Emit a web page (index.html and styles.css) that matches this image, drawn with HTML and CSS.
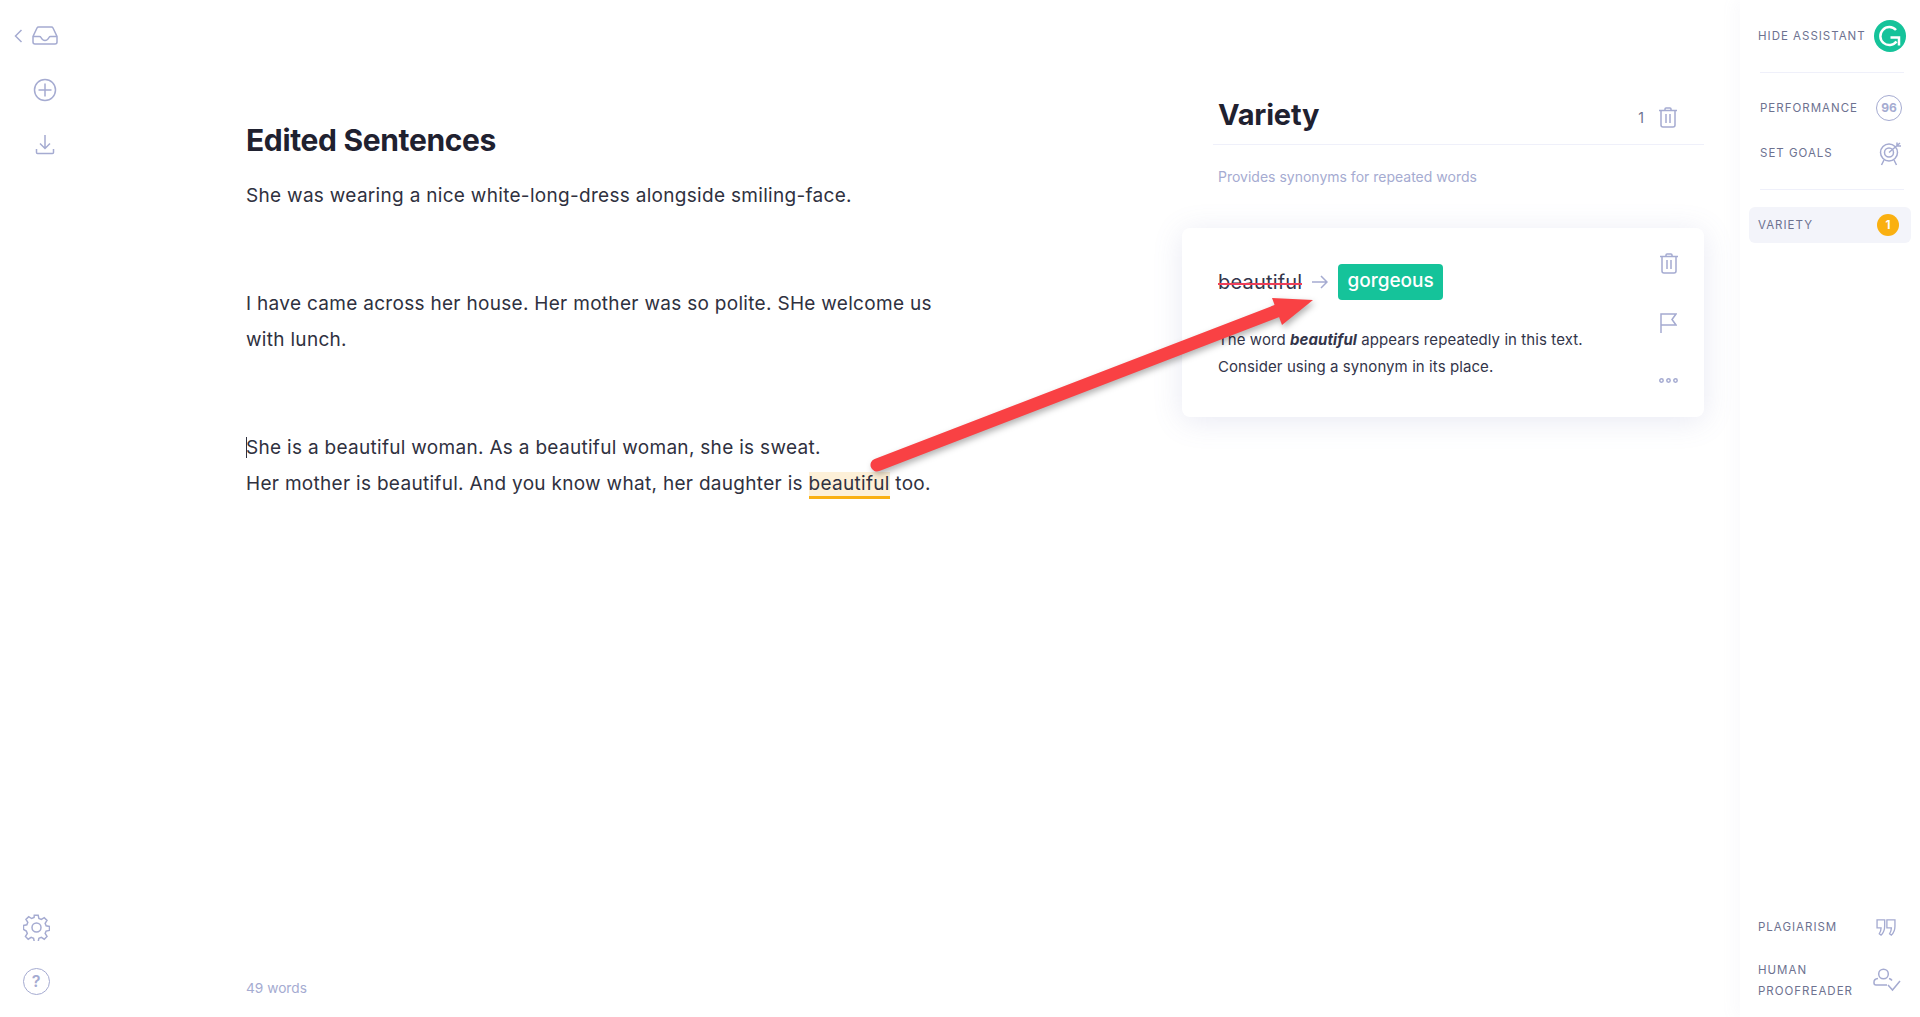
FILE: index.html
```html
<!DOCTYPE html>
<html lang="en">
<head>
  <meta charset="UTF-8">
  <title>Edited Sentences</title>
  <link rel="stylesheet" href="styles.css">
</head>
<body>

  <!-- left rail -->
  <nav class="rail">
    <div class="rail-top">
      <div class="rail-inbox">
        <svg class="ico-chevron" width="9" height="14" viewBox="0 0 9 14"><path d="M7.5 1 1.5 7l6 6"/></svg>
        <svg width="26" height="19" viewBox="0 0 26 19"><path d="M6.500 1h13q1 0 1.500 1L25 10.500V16q0 2-2 2H3q-2 0-2-2v-5.500L5 2q.5-1 1.500-1zM1 10.500h6.500q1 0 1.500 1 1.500 3 4 3t4-3q.5-1 1.500-1H25"/></svg>
      </div>
      <svg width="24" height="24" viewBox="0 0 24 24"><circle cx="12" cy="12" r="10.500"/><path d="M12 5.500v13M5.500 12h13"/></svg>
      <svg width="20" height="21" viewBox="0 0 20 21"><path d="M10 1v13M5 9.500l5 5 5-5M1.500 15v3.500q0 1 1 1h15q1 0 1-1V15"/></svg>
    </div>
    <div class="rail-bottom">
      <svg width="27" height="27" viewBox="0 0 27 27"><circle cx="13.500" cy="13.500" r="4.500"/><path d="M11.500 1h4l.7 3.400 2.500 1 3-1.900 2.800 2.800-1.900 3 1 2.500 3.400.7v4l-3.400.7-1 2.500 1.900 3-2.800 2.800-3-1.900-2.500 1-.7 3.400h-4l-.7-3.400-2.500-1-3 1.900-2.800-2.800 1.900-3-1-2.500L.5 15.500v-4l3.400-.7 1-2.500-1.900-3 2.800-2.800 3 1.900 2.500-1z" transform="translate(0 .2) scale(.98)"/></svg>
      <div class="help">?</div>
    </div>
  </nav>

  <!-- document -->
  <main class="editor">
    <h1>Edited Sentences</h1>
    <p class="para-1">She was wearing a nice white-long-dress alongside smiling-face.</p>
    <p class="para-2">I have came across her house. Her mother was so polite. SHe welcome us<br>with lunch.</p>
    <p class="para-3"><span class="caret"></span>She is a beautiful woman. As a beautiful woman, she is sweat.<br>Her mother is beautiful. And you know what, her daughter is <span class="mark">beautiful</span> too.</p>
    <div class="word-count">49 words</div>
  </main>

  <!-- suggestion panel -->
  <section class="panel">
    <header class="panel-head">
      <h2>Variety</h2>
      <div class="panel-count">
        <span>1</span>
        <svg class="ico-trash" width="18" height="21" viewBox="0 0 18 21"><path d="M0 3.500h18M6 3.500V2q0-1 1-1h4q1 0 1 1v1.500M2 3.500V18q0 2 2 2h10q2 0 2-2V3.500M7 7v9M11 7v9"/></svg>
      </div>
    </header>
    <p class="panel-sub">Provides synonyms for repeated words</p>

    <article class="card">
      <div class="card-body">
        <div class="swap">
          <span class="old">beautiful</span>
          <svg class="ico-arrow" width="16" height="14" viewBox="0 0 16 14"><path d="M0 7h15M9 1l6 6-6 6"/></svg>
          <span class="new">gorgeous</span>
        </div>
        <p>The word <b>beautiful</b> appears repeatedly in this text.<br>Consider using a synonym in its place.</p>
      </div>
      <div class="card-actions">
        <svg class="ico-trash" width="18" height="21" viewBox="0 0 18 21"><path d="M0 3.500h18M6 3.500V2q0-1 1-1h4q1 0 1 1v1.500M2 3.500V18q0 2 2 2h10q2 0 2-2V3.500M7 7v9M11 7v9"/></svg>
        <svg width="17" height="20" viewBox="0 0 17 20"><path d="M1 20V1h15l-4 5.500 4 5.500H1"/></svg>
        <svg width="19" height="5" viewBox="0 0 19 5"><circle cx="2.500" cy="2.500" r="1.700"/><circle cx="9.500" cy="2.500" r="1.700"/><circle cx="16.500" cy="2.500" r="1.700"/></svg>
      </div>
    </article>
  </section>

  <!-- right sidebar -->
  <aside class="side">
    <div class="side-top">
      <div class="side-row hide-row">
        <span>Hide assistant</span>
        <div class="logo">
          <svg width="32" height="32" viewBox="0 0 32 32"><path d="M22.500 21.500A9 9 0 1 1 22 10"/><path d="M16.500 17.500h8.500v8"/></svg>
        </div>
      </div>
      <div class="side-rule"></div>
      <div class="side-group">
        <div class="side-row">
          <span>Performance</span>
          <div class="score">96</div>
        </div>
        <div class="side-row">
          <span>Set goals</span>
          <svg class="ico-target" width="26" height="26" viewBox="0 0 26 26"><circle cx="11" cy="12.500" r="8.500"/><circle cx="11" cy="12.500" r="4.500"/><path d="M11 12.500 22 3M19 2.500v3.500h4M6 20l-2.500 5M16 20l2.500 5"/></svg>
        </div>
      </div>
      <div class="side-rule"></div>
      <div class="side-item">
        <span>Variety</span>
        <div class="badge">1</div>
      </div>
    </div>
    <div class="side-bottom">
      <div class="side-row plag-row">
        <span>Plagiarism</span>
        <svg width="20" height="17" viewBox="0 0 22 19"><path d="M1 1h8.500v7q0 6-4 10L3.500 16.500Q5.500 13 5.500 10H1zM12 1h9v7q0 6-4 10l-2-1.500q2-3.500 2-6.500h-5z"/></svg>
      </div>
      <div class="side-row human-row">
        <span>Human<br>proofreader</span>
        <svg width="28" height="25" viewBox="0 0 28 25"><circle cx="10.500" cy="6" r="4.800"/><path d="M14 17H3q-2 0-2-2v-1q0-3 4-3.500M16 10.500q2 .5 3 2M15 17l4.500 5L27 13"/></svg>
      </div>
    </div>
  </aside>

  <!-- annotation arrow drawn over the page -->
  <svg class="annotation" width="1920" height="1017" viewBox="0 0 1920 1017">
    <path class="arrow-line" d="M877 465 1290 306"/>
    <path class="arrow-head" d="M1272 298 1313 300 1282 325z"/>
  </svg>

</body>
</html>
```

FILE: styles.css
```css
* { margin: 0; padding: 0; box-sizing: border-box; }

html, body { width: 100%; height: 100%; overflow: hidden; }

body {
  display: flex;
  background: #fff;
  color: #2f3140;
  font-family: Inter, "Liberation Sans", sans-serif;
}

svg { fill: none; stroke: #a5abd1; stroke-width: 1.5; flex: none; display: block; }

/* ===== left rail ===== */
.rail {
  width: 72px;
  flex: none;
  display: flex;
  flex-direction: column;
  justify-content: space-between;
  padding: 26px 0 22px;
}
.rail-top { display: flex; flex-direction: column; align-items: center; gap: 32px; padding-left: 18px; }
.rail-inbox { display: flex; align-items: center; gap: 9px; margin-left: -18px; margin-bottom: 1px; }
.rail-bottom { display: flex; flex-direction: column; align-items: center; gap: 27px; }
.help {
  width: 27px;
  height: 27px;
  border: 1.500px solid #a5abd1;
  border-radius: 50%;
  color: #a5abd1;
  font-size: 16px;
  font-weight: 600;
  line-height: 24px;
  text-align: center;
}

/* ===== editor ===== */
.editor {
  width: 1110px;
  flex: none;
  display: flex;
  flex-direction: column;
  padding: 120px 0 19px 174px;
  font-size: 19px;
  line-height: 36px;
  letter-spacing: .3px;
}
.editor h1 { font-size: 30px; font-weight: 700; line-height: 40px; letter-spacing: -.35px; color: #1f2130; margin-bottom: 18px; }
.para-2 { margin-top: 72px; }
.para-3 { margin-top: 72px; }
.caret { display: inline-block; width: 1px; height: 21px; margin-right: -1px; background: #2f3140; vertical-align: -4px; }
.mark { background: #fdf0d8; border-bottom: 3px solid #fab011; padding-bottom: 1px; }
.word-count { margin-top: auto; font-size: 13.700px; line-height: 20px; letter-spacing: 0; color: #a5abd1; }

/* ===== panel ===== */
.panel { width: 522px; flex: none; padding-top: 90px; }
.panel-head {
  display: flex;
  justify-content: space-between;
  align-items: center;
  margin-left: 31px;
  padding: 0 27px 0 5px;
  height: 55px;
  border-bottom: 1px solid #eff0fa;
}
.panel-head h2 { margin-top: -5px; font-size: 29px; font-weight: 700; letter-spacing: -.2px; color: #1f2130; }
.panel-count { display: flex; align-items: center; gap: 15px; padding-top: 1px; font-size: 14px; color: #6d7290; }
.panel-sub { margin: 22px 0 0 36px; font-size: 14px; line-height: 20px; color: #a5abd1; }

.card {
  display: flex;
  justify-content: space-between;
  height: 189px;
  margin-top: 41px;
  padding: 25px 26px 0 36px;
  background: #fff;
  border-radius: 8px;
  box-shadow: 0 4px 30px rgba(110, 120, 180, .16);
}
.swap { display: flex; align-items: center; gap: 9px; margin-top: 11px; }
.old { font-size: 20px; letter-spacing: .2px; position: relative; color: #33354a; }
.old::after { content: ""; position: absolute; left: 0; right: 0; top: 13px; height: 2px; background: #ee3f5a; }
.ico-arrow { margin-left: 1px; }
.new { margin-left: 1px; padding: 0 9px; height: 36px; line-height: 34px; background: #15c39a; border-radius: 4px; color: #fff; font-size: 19px; font-weight: 500; }
.card-body p { margin-top: 26px; font-size: 15px; line-height: 27px; letter-spacing: .08px; color: #33354a; }
.card-body b { font-weight: 700; font-style: italic; }
.card-actions { display: flex; flex-direction: column; align-items: center; gap: 39px; }
.card-actions svg:last-child { margin-top: 6px; }

/* ===== sidebar ===== */
.side {
  flex: 1;
  display: flex;
  flex-direction: column;
  justify-content: space-between;
  margin-left: 36px;
  padding: 0 9px;
  box-shadow: -6px 0 14px rgba(150, 155, 200, .05);
  font-size: 11.500px;
  letter-spacing: 1px;
  text-transform: uppercase;
  color: #6d7290;
}
.side-row { display: flex; justify-content: space-between; align-items: center; padding: 0 9px 0 11px; }
.hide-row { height: 72px; padding: 0 5px 0 9px; }
.side-rule { height: 1px; margin: 0 7px 0 11px; background: #eff0fa; }
.logo { width: 32px; height: 32px; border-radius: 50%; background: #15c39a; }
.logo svg { stroke: #fff; stroke-width: 2.500px; }
.side-group { display: flex; flex-direction: column; gap: 19px; padding: 22px 0 23px; }
.ico-target { margin-right: -2px; }
.score {
  width: 26px;
  height: 26px;
  border: 1.500px solid #a5abd1;
  border-radius: 50%;
  color: #a5abd1;
  font-size: 12px;
  font-weight: 700;
  letter-spacing: 0;
  line-height: 23px;
  text-align: center;
}
.side-item {
  display: flex;
  justify-content: space-between;
  align-items: center;
  height: 36px;
  margin-top: 17px;
  padding: 0 12px 0 9px;
  background: #f3f4fa;
  border-radius: 6px;
}
.badge { width: 22px; height: 22px; border-radius: 50%; background: #fab011; color: #fff; font-size: 11.500px; font-weight: 700; letter-spacing: 0; line-height: 22px; text-align: center; }
.side-bottom { display: flex; flex-direction: column; gap: 22px; padding-bottom: 15.500px; }
.side-bottom .side-row { line-height: 21px; }
.plag-row.side-row { padding: 0 15px 0 9px; }
.human-row.side-row { padding: 0 10px 0 9px; }

/* ===== annotation ===== */
.annotation { position: absolute; top: 0; left: 0; filter: drop-shadow(2px 3px 3px rgba(0, 0, 0, .3)); }
.arrow-line { fill: none; stroke: #f94144; stroke-width: 13; stroke-linecap: round; }
.arrow-head { fill: #f94144; stroke: none; }
```
